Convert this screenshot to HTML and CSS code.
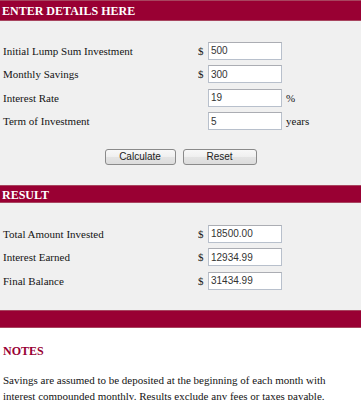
FILE: index.html
```html
<!DOCTYPE html>
<html lang="en">
<head>
    <meta charset="UTF-8">
    <meta name="viewport" content="width=device-width, initial-scale=1.0">
    <title>Savings Calculator</title>
    <link rel="stylesheet" href="styles.css">
</head>
<body>
    <div class="bar">
        <h2>ENTER DETAILS HERE</h2>
    </div>
    <div class="panel">
        <div class="form-grid">
            <label>Initial Lump Sum Investment</label>
            <span class="unit">$</span>
            <input type="text" value="500">
            <span></span>

            <label>Monthly Savings</label>
            <span class="unit">$</span>
            <input type="text" value="300">
            <span></span>

            <label>Interest Rate</label>
            <span class="unit"></span>
            <input type="text" value="19">
            <span class="suffix">%</span>

            <label>Term of Investment</label>
            <span class="unit"></span>
            <input type="text" value="5">
            <span class="suffix">years</span>
        </div>
        <div class="buttons">
            <button class="btn-calc">Calculate</button>
            <button class="btn-reset">Reset</button>
        </div>
    </div>

    <div class="bar">
        <h2>RESULT</h2>
    </div>
    <div class="panel result">
        <div class="form-grid">
            <label>Total Amount Invested</label>
            <span class="unit">$</span>
            <input type="text" value="18500.00">
            <span></span>

            <label>Interest Earned</label>
            <span class="unit">$</span>
            <input type="text" value="12934.99">
            <span></span>

            <label>Final Balance</label>
            <span class="unit">$</span>
            <input type="text" value="31434.99">
            <span></span>
        </div>
    </div>

    <div class="bar empty"></div>

    <div class="notes">
        <h3>NOTES</h3>
        <p>Savings are assumed to be deposited at the beginning of each month with interest compounded monthly. Results exclude any fees or taxes payable.</p>
    </div>
</body>
</html>
```

FILE: styles.css
```css
body {
    margin: 0;
    background-color: #ffffff;
    font-family: "Liberation Serif", "Times New Roman", serif;
    font-size: 11px;
    color: #141414;
}

.bar {
    background-color: #990033;
    border-top: 1px solid #a8455f;
    border-bottom: 1px solid #a8455f;
    height: 16px;
    padding: 0 2px;
}

.bar:first-child {
    height: 19px;
}

.bar h2 {
    margin: 0;
    font-size: 12px;
    line-height: 18px;
    font-weight: bold;
    color: #ffffff;
}

.bar:first-child h2 {
    line-height: 21px;
}

.panel {
    background-color: #f0f0f0;
    padding: 18px 0 20px 3px;
}

.panel.result {
    padding: 19px 0 17px 3px;
}

.form-grid {
    display: grid;
    grid-template-columns: 195px 10px 74px auto;
    grid-auto-rows: 23.5px;
    align-items: center;
}

.suffix {
    margin-left: 4px;
}

input {
    box-sizing: border-box;
    width: 74px;
    height: 18px;
    margin: 0;
    padding: 0 2px;
    border: 1px solid #b8c0cc;
    border-top-color: #abadb3;
    background-color: #ffffff;
    font-family: "Liberation Sans", Arial, sans-serif;
    font-size: 10px;
    color: #333333;
}

.buttons {
    display: flex;
    justify-content: center;
    gap: 7px;
    margin-top: 16px;
    padding-right: 3px;
}

button {
    box-sizing: border-box;
    height: 16px;
    padding: 0;
    border: 1px solid #8a8a8a;
    border-radius: 3px;
    background: linear-gradient(#f8f8f8, #efefef 50%, #e4e4e4 50%, #dcdcdc);
    font-family: "Liberation Sans", Arial, sans-serif;
    font-size: 10px;
    line-height: 14px;
    color: #222222;
}

.btn-calc {
    width: 71px;
}

.btn-reset {
    width: 74px;
}

.notes {
    padding: 0 3px;
}

.notes h3 {
    margin: 15px 0 0;
    font-size: 12px;
    line-height: 16px;
    color: #990033;
}

.notes p {
    margin: 13px 0 0;
    font-size: 11px;
    line-height: 16px;
}
```
